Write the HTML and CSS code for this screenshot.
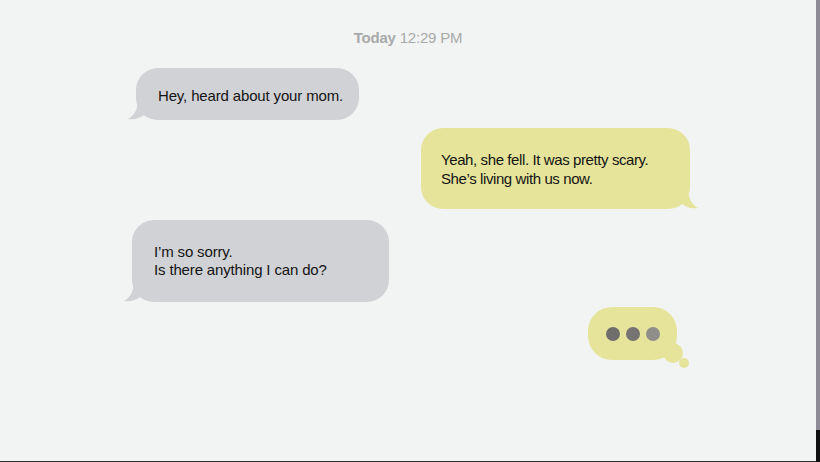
FILE: index.html
```html
<!DOCTYPE html>
<html>
<head>
<meta charset="utf-8">
<link rel="stylesheet" href="styles.css">
</head>
<body>
<div class="screen">
  <div class="chat">
    <div class="stamp"><b>Today</b> 12:29 PM</div>

    <div class="row row-left row-1">
      <div class="bubble gray msg-1">
        <svg class="tail tail-left" width="26" height="24" viewBox="0 0 26 24"><path d="M10 0 C10 12 7 18 0 22 C7 23 12 21 16 18 C19 20 22 22 26 22 L26 0 Z" fill="#d1d2d5"/></svg>
        <p>Hey, heard about your mom.</p>
      </div>
    </div>

    <div class="row row-right row-2">
      <div class="bubble yellow msg-2">
        <svg class="tail tail-right" width="26" height="24" viewBox="0 0 26 24"><path d="M16 0 C16 12 19 18 26 22 C19 23 14 21 10 18 C7 20 4 22 0 22 L0 0 Z" fill="#e6e49b"/></svg>
        <p class="tight">Yeah, she fell. It was pretty scary.<br>She’s living with us now.</p>
      </div>
    </div>

    <div class="row row-left row-3">
      <div class="bubble gray msg-3">
        <svg class="tail tail-left" width="26" height="24" viewBox="0 0 26 24"><path d="M10 0 C10 12 7 18 0 22 C7 23 12 21 16 18 C19 20 22 22 26 22 L26 0 Z" fill="#d1d2d5"/></svg>
        <p>I’m so sorry.<br>Is there anything I can do?</p>
      </div>
    </div>

    <div class="row row-right row-4">
      <div class="typing">
        <span class="dot d1"></span>
        <span class="dot d2"></span>
        <span class="dot d3"></span>
        <span class="puff puff-big"></span>
        <span class="puff puff-small"></span>
      </div>
    </div>
  </div>
  <div class="strip"><div class="strip-end"></div></div>
</div>
</body>
</html>
```

FILE: styles.css
```css
* { box-sizing: border-box; }
html, body { margin: 0; padding: 0; }
body {
  width: 820px;
  height: 462px;
  overflow: hidden;
  background: #f2f4f3;
  font-family: "Liberation Sans", Arial, sans-serif;
}
.screen {
  display: flex;
  width: 820px;
  height: 462px;
}
.chat {
  width: 816px;
  height: 462px;
  border-bottom: 1px solid #2b2b2b;
  display: flex;
  flex-direction: column;
  padding-top: 29px;
}
.stamp {
  text-align: center;
  font-size: 15px;
  line-height: 18px;
  color: #a8a9a9;
  height: 18px;
  letter-spacing: -0.2px;
}
.stamp b { font-weight: bold; }
.row { display: flex; }
.row-left { justify-content: flex-start; }
.row-right { justify-content: flex-end; }
.row-1 { margin-top: 21px; padding-left: 136px; }
.row-2 { margin-top: 8px; padding-right: 126px; }
.row-3 { margin-top: 11px; padding-left: 132px; }
.row-4 { margin-top: 5px; padding-right: 139px; }

.bubble {
  position: relative;
  border-radius: 22px;
  display: flex;
  align-items: center;
  color: #141414;
  font-size: 15px;
  line-height: 19px;
  letter-spacing: -0.15px;
}
.bubble p { margin: 0; position: relative; }
.bubble p.tight { letter-spacing: -0.4px; }
.gray { background: #d1d2d5; }
.yellow { background: #e6e49b; }
.msg-1 { width: 223px; height: 52px; padding-left: 22px; padding-top: 2px; }
.msg-2 { width: 269px; height: 81px; padding-left: 20px; }
.msg-3 { width: 257px; height: 82px; padding-left: 22px; }
.msg-3 p { line-height: 18px; }

.tail { position: absolute; bottom: -1px; }
.tail-left { left: -8px; }
.tail-right { right: -8px; }

.typing {
  position: relative;
  width: 89px;
  height: 53px;
  border-radius: 24px;
  background: #e6e49b;
  display: flex;
  align-items: center;
  justify-content: center;
  gap: 6px;
}
.dot {
  width: 14px;
  height: 14px;
  border-radius: 50%;
}
.d1 { background: #6f6e6d; }
.d2 { background: #757472; }
.d3 { background: #8f8e8b; }
.puff {
  position: absolute;
  border-radius: 50%;
  background: #e6e49b;
}
.puff-big { width: 20px; height: 20px; left: 75px; top: 36px; }
.puff-small { width: 10px; height: 10px; left: 91px; top: 51px; }

.strip {
  width: 4px;
  height: 462px;
  background: #8e8a96;
  display: flex;
  flex-direction: column;
  justify-content: flex-end;
}
.strip-end { height: 32px; background: #111; }
```
